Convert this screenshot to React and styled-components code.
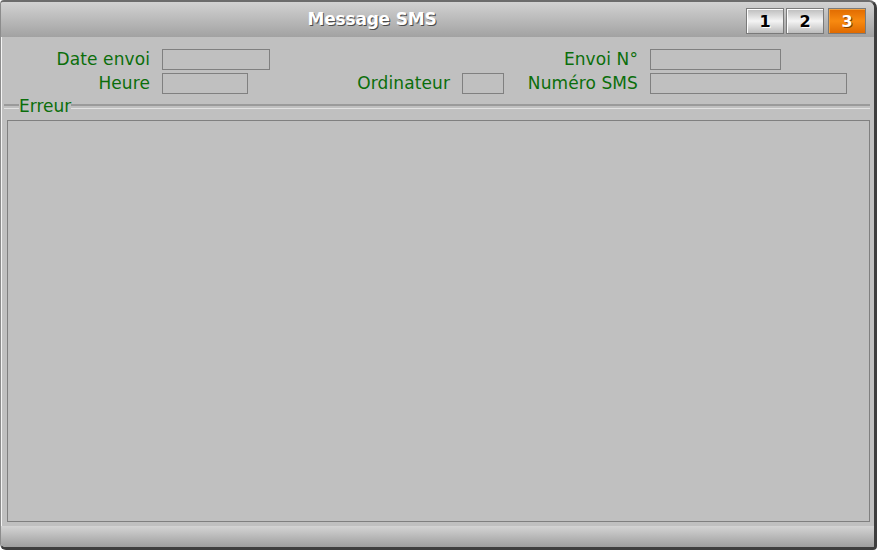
import React from 'react'
import styled, {createGlobalStyle} from "styled-components";

const GlobalStyle = createGlobalStyle`
    html, body {
        margin: 0;
        padding: 0;
        background: #ffffff;
    }
    body {
        font-family: "DejaVu Sans", Verdana, sans-serif;
    }
`;

const Window = styled.div`
    width: 877px;
    height: 550px;
    box-sizing: border-box;
    display: flex;
    flex-direction: column;
    background: #c0c0c0;
    border-top: 2px solid #6c6c6c;
    border-left: 1px solid #8c8c8c;
    border-right: 3px solid #3e3e3e;
    border-bottom: 3px solid #3e3e3e;
    border-radius: 4px 8px 4px 6px;
    box-shadow: inset 1px 0 0 #f4f4f4;
    overflow: hidden;
`;

const TitleBar = styled.div`
    height: 35px;
    flex-shrink: 0;
    display: flex;
    align-items: center;
    padding-left: 1px;
    background-image: linear-gradient(to bottom, #d2d2d2, #a2a2a2);
`;

const Title = styled.h1`
    flex: 1;
    margin: -2px 0 0;
    padding-right: 4px;
    text-align: center;
    font-size: 17px;
    font-weight: bold;
    color: #ffffff;
    text-shadow: 1px 1px 0 #4a4a4a;
    letter-spacing: -0.2px;
`;

const Tabs = styled.div`
    display: flex;
    gap: 2px;
    margin-right: 8px;
    margin-top: 3px;
`;

const Tab = styled.div`
    width: 38px;
    height: 26px;
    box-sizing: border-box;
    display: flex;
    align-items: center;
    justify-content: center;
    margin-left: ${p => p.$active ? '2px' : '0'};
    font-weight: bold;
    font-size: 16px;
    border: 1px solid #7a7a7a;
    color: ${p => p.$active ? '#ffffff' : '#000000'};
    text-shadow: ${p => p.$active ? '1px 1px 0 #7a3a00' : '1px 1px 0 #ffffff'};
    background-image: ${p => p.$active
        ? 'linear-gradient(to bottom, #e06a00, #f88a10 50%, #e06a00)'
        : 'linear-gradient(to bottom, #bcbcbc, #f4f4f4 50%, #bcbcbc)'};
    box-shadow: inset 1px 1px 0 ${p => p.$active ? '#f0a040' : '#ffffff'};
`;

const Form = styled.div`
    display: grid;
    grid-template-columns: 149px 120px 156px 42px 122px 197px;
    grid-auto-rows: 21px;
    column-gap: 12px;
    row-gap: 3px;
    margin-top: 12px;
`;

const Label = styled.div`
    font-size: 17px;
    letter-spacing: 0.1px;
    color: #0b6e0b;
    text-align: right;
    line-height: 21px;
    white-space: nowrap;
`;

const Input = styled.div`
    width: ${p => p.$w}px;
    height: 21px;
    box-sizing: border-box;
    border: 1px solid #808080;
`;

const Group = styled.div`
    flex: 1;
    display: flex;
    flex-direction: column;
    margin-top: 2px;
    padding: 0 4px 0 3px;
`;

const Legend = styled.div`
    display: flex;
    align-items: center;
    height: 20px;
    &:before, &:after {
        content: '';
        height: 2px;
        border-top: 2px solid #9a9a9a;
        border-bottom: 1px solid #e2e2e2;
    }
    &:before {
        width: 15px;
    }
    &:after {
        flex: 1;
    }
`;

const LegendText = styled.span`
    font-size: 17px;
    color: #0b6e0b;
    line-height: 18px;
`;

const GroupBox = styled.div`
    flex: 1;
    margin: 4px 0 4px 3px;
    border: 1px solid #808080;
`;

const Footer = styled.div`
    height: 21px;
    flex-shrink: 0;
    background-image: linear-gradient(to bottom, #d4d4d4, #9e9e9e);
`;

const App = () => {
    return <>
        <GlobalStyle/>
        <Window>
            <TitleBar>
                <Title>Message SMS</Title>
                <Tabs>
                    <Tab>1</Tab>
                    <Tab>2</Tab>
                    <Tab $active>3</Tab>
                </Tabs>
            </TitleBar>
            <Form>
                <Label>Date envoi</Label>
                <Input $w={108}/>
                <div/>
                <div/>
                <Label>Envoi N°</Label>
                <Input $w={131}/>

                <Label>Heure</Label>
                <Input $w={86}/>
                <Label>Ordinateur</Label>
                <Input $w={42}/>
                <Label>Numéro SMS</Label>
                <Input $w={197}/>
            </Form>
            <Group>
                <Legend><LegendText>Erreur</LegendText></Legend>
                <GroupBox/>
            </Group>
            <Footer/>
        </Window>
    </>
};

export default App;
